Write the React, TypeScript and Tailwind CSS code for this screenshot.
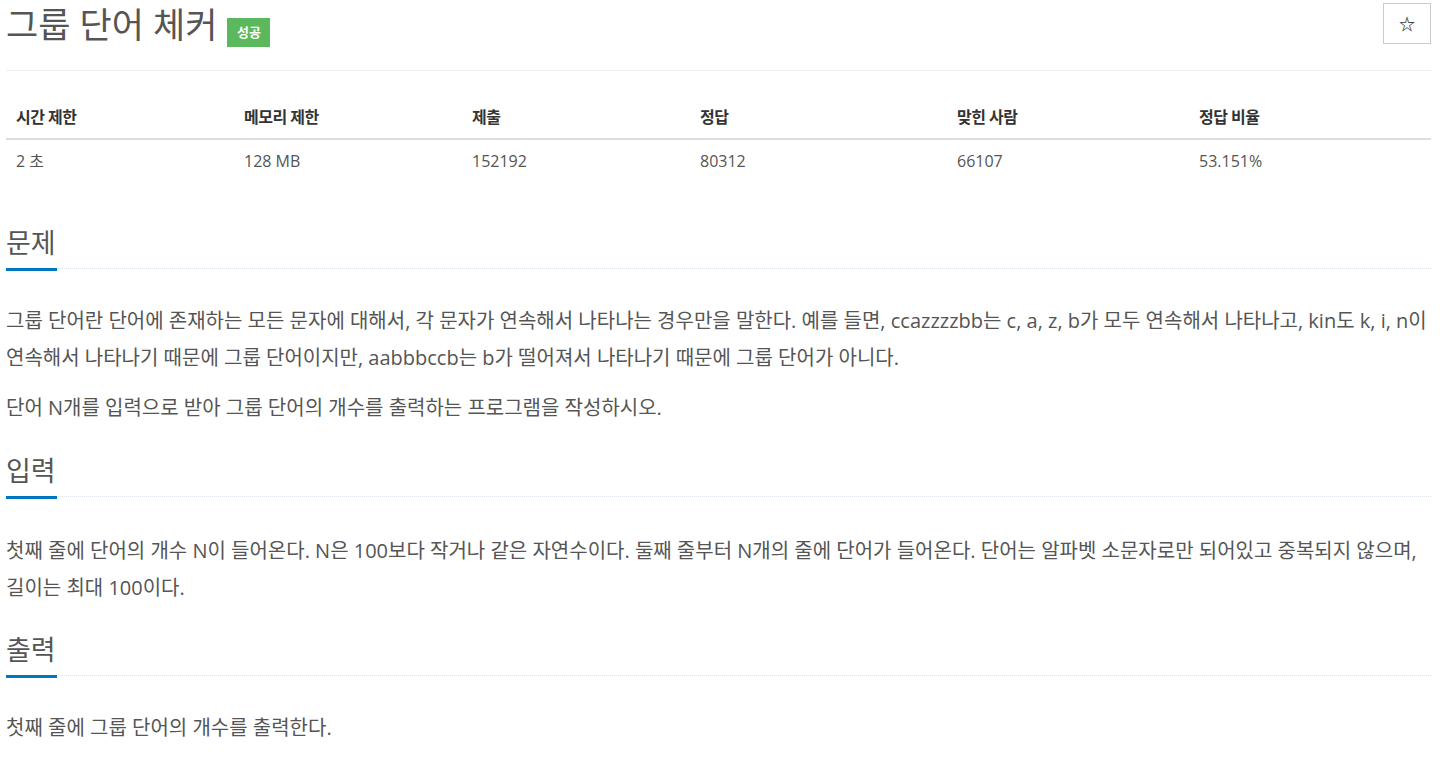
import React from "react";

const font = { fontFamily: '"Open Sans", "Noto Sans CJK KR", sans-serif' };

function SectionHeader({ title }: { title: string }) {
  return (
    <div className="relative border-b border-dotted border-[#dde3ea] pb-[7px]">
      <h2 className="text-[27px] leading-[36px] text-[#555]">{title}</h2>
      <div className="absolute left-0 bottom-[-3px] h-[3px] w-[51px] bg-[#0076c0]" />
    </div>
  );
}

const cols = [
  { h: "시간 제한", v: "2 초", w: "w-[228px]" },
  { h: "메모리 제한", v: "128 MB", w: "w-[228px]" },
  { h: "제출", v: "152192", w: "w-[228px]" },
  { h: "정답", v: "80312", w: "w-[257px]" },
  { h: "맞힌 사람", v: "66107", w: "w-[242px]" },
  { h: "정답 비율", v: "53.151%", w: "flex-1" },
];

export default function App() {
  return (
    <div className="bg-white min-h-[757px] px-[6px] pr-[16px] pt-[3px] text-[#333]" style={font}>
      <div className="flex items-start justify-between border-b border-[#eee] pb-[23px]">
        <div className="flex items-start gap-[10px] pt-[4px]">
          <h1 className="text-[35px] leading-[36px] text-[#555] whitespace-nowrap">그룹 단어 체커</h1>
          <span className="mt-[11px] flex h-[29px] w-[43px] items-center justify-center bg-[#5cb85c] text-[13px] font-bold text-white">
            성공
          </span>
        </div>
        <button className="flex h-[41px] w-[48px] items-center justify-center border border-[#ccc] bg-white text-[16px] font-bold text-[#333]">
          ☆
        </button>
      </div>

      <div className="mt-[25px] text-[16px]">
        <div className="flex border-b-2 border-[#ddd] h-[44px] items-center font-bold text-[#333] tracking-[-0.5px]">
          {cols.map((c) => (
            <div key={c.h} className={`${c.w} px-[10px]`}>{c.h}</div>
          ))}
        </div>
        <div className="flex h-[42px] items-center text-[#555]">
          {cols.map((c) => (
            <div key={c.h} className={`${c.w} px-[10px]`}>{c.v}</div>
          ))}
        </div>
      </div>

      <div className="mt-[43px]">
        <SectionHeader title="문제" />
        <div className="mt-[33px] text-[20px] leading-[37px] text-[#555] whitespace-nowrap">
          <p>
            그룹 단어란 단어에 존재하는 모든 문자에 대해서, 각 문자가 연속해서 나타나는 경우만을 말한다. 예를 들면, ccazzzzbb는 c, a, z, b가 모두 연속해서 나타나고, kin도 k, i, n이
            <br />
            연속해서 나타나기 때문에 그룹 단어이지만, aabbbccb는 b가 떨어져서 나타나기 때문에 그룹 단어가 아니다.
          </p>
          <p className="mt-[13px]">단어 N개를 입력으로 받아 그룹 단어의 개수를 출력하는 프로그램을 작성하시오.</p>
        </div>
      </div>

      <div className="mt-[27px]">
        <SectionHeader title="입력" />
        <div className="mt-[35px] text-[20px] leading-[37px] text-[#555] whitespace-nowrap">
          <p>
            첫째 줄에 단어의 개수 N이 들어온다. N은 100보다 작거나 같은 자연수이다. 둘째 줄부터 N개의 줄에 단어가 들어온다. 단어는 알파벳 소문자로만 되어있고 중복되지 않으며,
            <br />
            길이는 최대 100이다.
          </p>
        </div>
      </div>

      <div className="mt-[26px]">
        <SectionHeader title="출력" />
        <div className="mt-[33px] text-[20px] leading-[37px] text-[#555] whitespace-nowrap">
          <p>첫째 줄에 그룹 단어의 개수를 출력한다.</p>
        </div>
      </div>
    </div>
  );
}
